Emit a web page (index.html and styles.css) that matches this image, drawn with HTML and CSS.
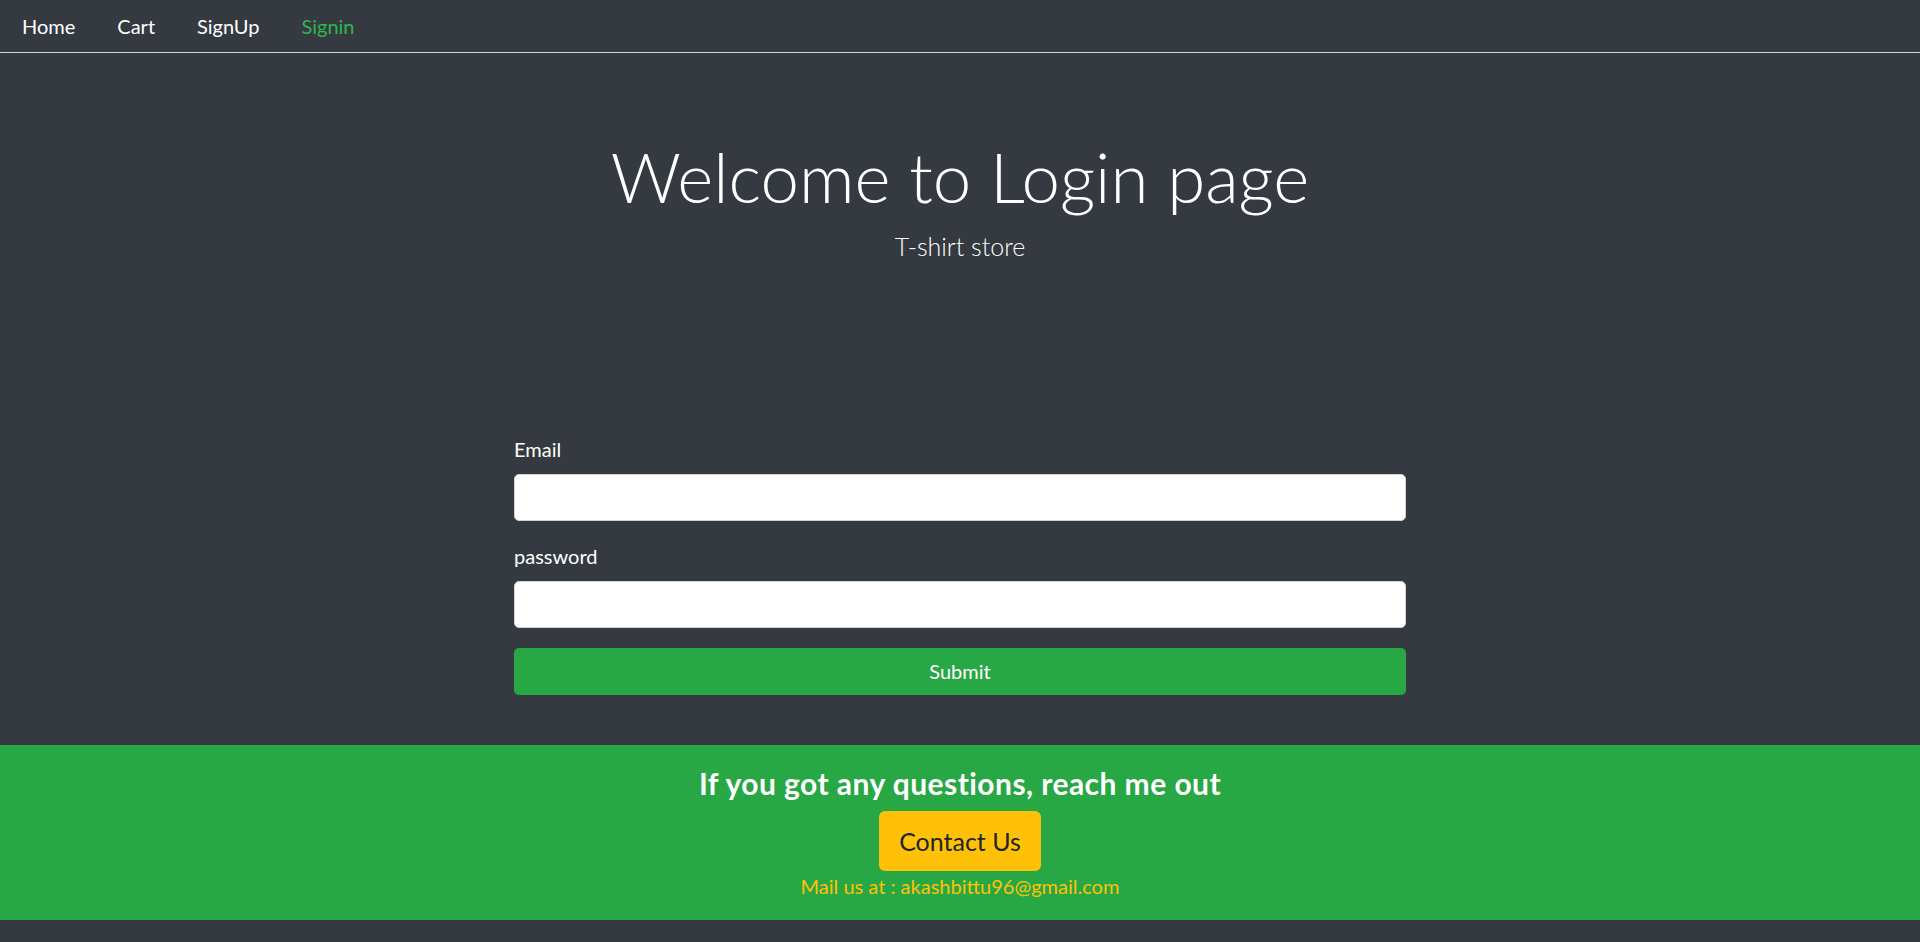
FILE: index.html
```html
<!DOCTYPE html>
<html lang="en">
<head>
<meta charset="utf-8">
<title>Login</title>
<link rel="stylesheet" href="styles.css">
</head>
<body>
<nav class="topnav">
  <a class="nav-link" href="#">Home</a>
  <a class="nav-link" href="#">Cart</a>
  <a class="nav-link" href="#">SignUp</a>
  <a class="nav-link active" href="#">Signin</a>
</nav>
<main class="page">
  <header class="hero">
    <h1 class="hero-title">Welcome to Login page</h1>
    <p class="hero-lead">T-shirt store</p>
  </header>
  <form class="login-form">
    <div class="form-group">
      <label class="form-label" for="email">Email</label>
      <input class="form-input" id="email" type="email">
    </div>
    <div class="form-group">
      <label class="form-label" for="password">password</label>
      <input class="form-input" id="password" type="password">
    </div>
    <button class="submit-btn" type="button">Submit</button>
  </form>
</main>
<footer class="footer">
  <h4 class="footer-title">If you got any questions, reach me out</h4>
  <button class="contact-btn" type="button">Contact Us</button>
  <p class="footer-mail">Mail us at : akashbittu96@gmail.com</p>
</footer>
</body>
</html>
```
FILE: styles.css
```css
* { box-sizing: border-box; }
html, body { margin: 0; padding: 0; }
body {
  background: #343a40;
  color: #fff;
  font-family: Lato, "Open Sans", sans-serif;
  font-size: 20px;
  line-height: 1.5;
}
.topnav {
  display: flex;
  height: 53px;
  padding-left: 1px;
  border-bottom: 1px solid #d4d6d8;
}
.nav-link {
  display: block;
  padding: 0 21px;
  line-height: 52px;
  color: #fff;
  text-decoration: none;
  font-size: 20px;
}
.nav-link.active { color: #2fb552; }
.page { padding-top: 82px; padding-bottom: 50px; }
.hero { text-align: center; }
.hero-title {
  margin: 0 0 9px;
  font-size: 69px;
  font-weight: 300;
  line-height: 84px;
}
.hero-lead {
  margin: 0;
  font-size: 25px;
  font-weight: 300;
  line-height: 37.5px;
}
.login-form {
  width: 892px;
  margin: 168px auto 0;
}
.form-group { margin-bottom: 20px; }
.form-label {
  display: block;
  margin-bottom: 10px;
  line-height: 30px;
  font-size: 20px;
}
.form-input {
  display: block;
  width: 100%;
  height: 47px;
  border: 1px solid #ced4da;
  border-radius: 5px;
  background: #fff;
  font-size: 20px;
}
.submit-btn {
  display: block;
  width: 100%;
  height: 47px;
  margin-top: 2px;
  border: 0;
  border-radius: 5px;
  background: #28a745;
  color: #fff;
  font-family: inherit;
  font-size: 20px;
}
.footer {
  background: #28a745;
  text-align: center;
  padding: 20px 0 19px;
}
.footer-title {
  margin: 0 0 10px;
  font-size: 30px;
  font-weight: 700;
  line-height: 36px;
  letter-spacing: 0.45px;
}
.contact-btn {
  display: inline-block;
  width: 162px;
  height: 60px;
  border: 0;
  border-radius: 6px;
  background: #ffc107;
  color: #212529;
  font-family: inherit;
  font-size: 25px;
}
.footer-mail {
  margin: 0;
  color: #ffc107;
  font-size: 20px;
  line-height: 30px;
}
```
